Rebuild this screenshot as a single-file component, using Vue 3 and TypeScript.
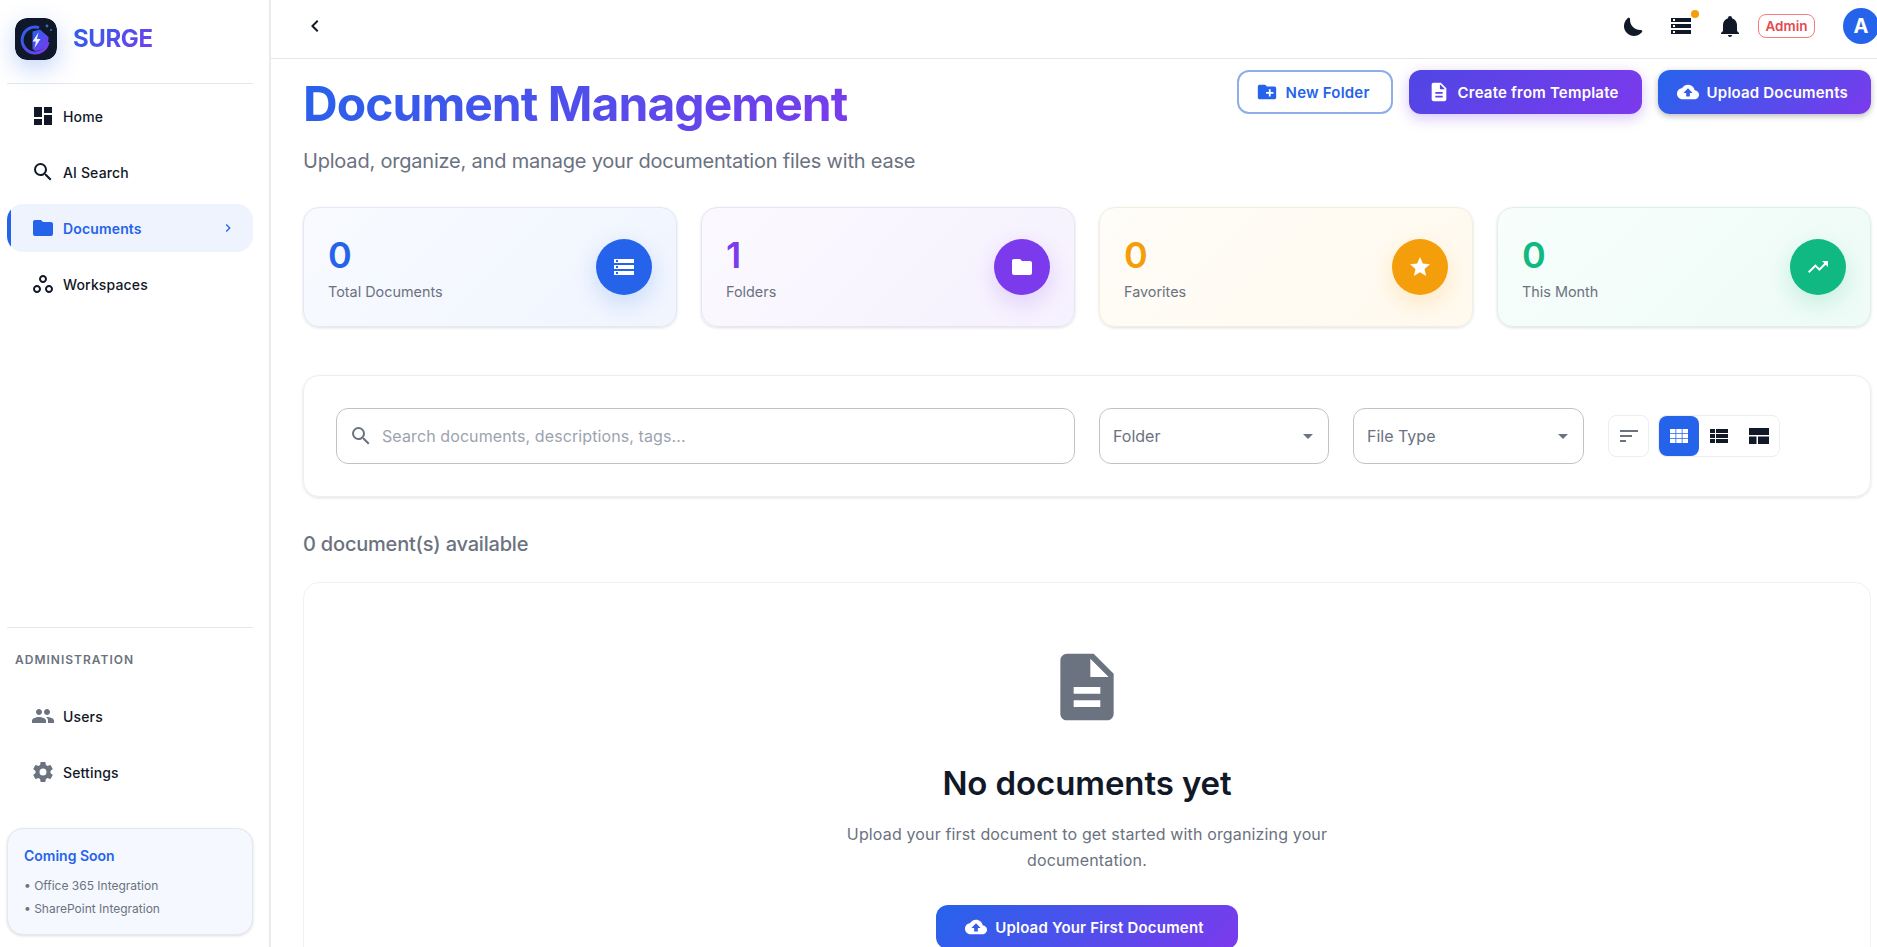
<template>
  <div class="layout">
    <aside class="sidebar">
      <div class="brand">
        <svg class="logo" viewBox="0 0 42 42">
          <defs>
            <linearGradient id="logoRing" x1="0" y1="0" x2="1" y2="1">
              <stop offset="0" stop-color="#2563eb" />
              <stop offset="1" stop-color="#7c3aed" />
            </linearGradient>
          </defs>
          <rect width="42" height="42" rx="12" fill="#0f172a" />
          <path d="M24 9.6A13 13 0 1 0 33 24" fill="none" stroke="url(#logoRing)" stroke-width="3" />
          <path d="M17.5 13.5L25 11.5L33.5 19A13 13 0 0 1 20 33L17.5 31Z" fill="url(#logoRing)" />
          <path d="M23.5 14.5L17.5 23.5h3.5l-1.5 6.5 6-9h-3.5Z" fill="#eef2ff" />
          <circle cx="32" cy="8" r="1.4" fill="#3b6ea8" />
          <circle cx="36" cy="12" r="1.1" fill="#3b6ea8" />
        </svg>
        <span class="brand-name">SURGE</span>
      </div>

      <nav class="nav">
        <a v-for="item in mainNav" :key="item.label" class="nav-item" :class="{ active: item.active }">
          <svg class="icon" viewBox="0 0 24 24"><path :d="item.icon" /></svg>
          <span>{{ item.label }}</span>
          <svg v-if="item.active" class="chev" viewBox="0 0 24 24"><path :d="icons.chevronRight" /></svg>
        </a>
      </nav>

      <div class="side-bottom">
        <div class="section-title">ADMINISTRATION</div>
        <nav class="nav">
          <a v-for="item in adminNav" :key="item.label" class="nav-item admin">
            <svg class="icon" viewBox="0 0 24 24"><path :d="item.icon" /></svg>
            <span>{{ item.label }}</span>
          </a>
        </nav>
        <div class="soon">
          <div class="soon-title">Coming Soon</div>
          <div class="soon-line">• Office 365 Integration</div>
          <div class="soon-line">• SharePoint Integration</div>
        </div>
      </div>
    </aside>

    <div class="main">
      <header class="topbar">
        <button class="back">
          <svg viewBox="0 0 24 24"><path :d="icons.chevronLeft" /></svg>
        </button>
        <div class="top-actions">
          <svg class="top-icon" viewBox="0 0 24 24"><path :d="icons.moon" /></svg>
          <span class="server">
            <svg class="top-icon" viewBox="0 0 24 24"><path :d="icons.storage" /></svg>
            <i class="dot"></i>
          </span>
          <svg class="top-icon" viewBox="0 0 24 24"><path :d="icons.bell" /></svg>
          <span class="role">Admin</span>
          <span class="avatar">A</span>
        </div>
      </header>

      <main class="page">
        <section class="page-head">
          <div>
            <h1>Document Management</h1>
            <p class="sub">Upload, organize, and manage your documentation files with ease</p>
          </div>
          <div class="head-actions">
            <button class="btn outline">
              <svg viewBox="0 0 24 24"><path :d="icons.folderPlus" /></svg>New Folder
            </button>
            <button class="btn violet">
              <svg viewBox="0 0 24 24"><path :d="icons.doc" /></svg>Create from Template
            </button>
            <button class="btn primary">
              <svg viewBox="0 0 24 24"><path :d="icons.cloud" /></svg>Upload Documents
            </button>
          </div>
        </section>

        <section class="stats">
          <div v-for="s in stats" :key="s.label" class="stat" :class="s.tone">
            <div>
              <div class="stat-num">{{ s.value }}</div>
              <div class="stat-label">{{ s.label }}</div>
            </div>
            <span class="stat-icon">
              <svg viewBox="0 0 24 24"><path :d="s.icon" /></svg>
            </span>
          </div>
        </section>

        <section class="filters">
          <label class="search">
            <svg viewBox="0 0 24 24"><path :d="icons.search" /></svg>
            <input type="text" placeholder="Search documents, descriptions, tags..." />
          </label>
          <div class="select">
            <span>Folder</span>
            <svg viewBox="0 0 24 24"><path d="M7 10l5 5 5-5z" /></svg>
          </div>
          <div class="select">
            <span>File Type</span>
            <svg viewBox="0 0 24 24"><path d="M7 10l5 5 5-5z" /></svg>
          </div>
          <button class="sort">
            <svg viewBox="0 0 24 24"><path d="M3 13H15V11H3M3 6V8H21V6M3 18H9V16H3V18Z" /></svg>
          </button>
          <div class="views">
            <button class="view on">
              <svg viewBox="0 0 24 24"><path d="M3 5h5.5v4.3H3zM9.25 5h5.5v4.3h-5.5zM15.5 5H21v4.3h-5.5zM3 10h5.5v4H3zM9.25 10h5.5v4h-5.5zM15.5 10H21v4h-5.5zM3 14.7h5.5V19H3zM9.25 14.7h5.5V19h-5.5zM15.5 14.7H21V19h-5.5z" /></svg>
            </button>
            <button class="view">
              <svg viewBox="0 0 24 24"><path d="M3 5h5v4H3zM9 5h12v4H9zM3 10h5v4H3zM9 10h12v4H9zM3 15h5v4H3zM9 15h12v4H9z" /></svg>
            </button>
            <button class="view">
              <svg viewBox="0 0 24 24"><path d="M2 4h20v7H2zM2 12.5h7.5V20H2zM11 12.5h11V20H11z" /></svg>
            </button>
          </div>
        </section>

        <div class="count">0 document(s) available</div>

        <section class="empty">
          <svg class="empty-icon" viewBox="0 0 24 24"><path :d="icons.doc" /></svg>
          <h2>No documents yet</h2>
          <p>Upload your first document to get started with organizing your documentation.</p>
          <button class="btn primary first">
            <svg viewBox="0 0 24 24"><path :d="icons.cloud" /></svg>Upload Your First Document
          </button>
        </section>
      </main>
    </div>
  </div>
</template>

<script setup lang="ts">
const icons = {
  chevronLeft: "M15.41,16.58L10.83,12L15.41,7.41L14,6L8,12L14,18L15.41,16.58Z",
  chevronRight: "M8.59,16.58L13.17,12L8.59,7.41L10,6L16,12L10,18L8.59,16.58Z",
  moon: "M18.97,15.95C19.8,15.87 20.69,17.05 20.16,17.8C19.84,18.25 19.5,18.67 19.08,19.07C15.17,23 8.84,23 4.94,19.07C1.03,15.17 1.03,8.83 4.94,4.93C5.34,4.53 5.76,4.17 6.21,3.85C6.96,3.32 8.14,4.21 8.06,5.04C7.79,7.9 8.75,10.87 10.95,13.06C13.14,15.26 16.1,16.22 18.97,15.95Z",
  storage: "M2 20h20v-4H2v4zm2-3h2v2H4v-2zM2 4v4h20V4H2zm4 3H4V5h2v2zm-4 7h20v-4H2v4zm2-3h2v2H4v-2z",
  bell: "M21,19V20H3V19L5,17V11C5,7.9 7.03,5.17 10,4.29C10,4.19 10,4.1 10,4A2,2 0 0,1 12,2A2,2 0 0,1 14,4C14,4.1 14,4.19 14,4.29C16.97,5.17 19,7.9 19,11V17L21,19M14,21A2,2 0 0,1 12,23A2,2 0 0,1 10,21",
  folder: "M10,4H4C2.89,4 2,4.89 2,6V18A2,2 0 0,0 4,20H20A2,2 0 0,0 22,18V8C22,6.89 21.1,6 20,6H12L10,4Z",
  folderPlus: "M20 6h-8l-2-2H4c-1.11 0-1.99.89-1.99 2L2 18c0 1.11.89 2 2 2h16c1.11 0 2-.89 2-2V8c0-1.11-.89-2-2-2zm-1 8h-3v3h-2v-3h-3v-2h3V9h2v3h3v2z",
  doc: "M14 2H6c-1.1 0-1.99.9-1.99 2L4 20c0 1.1.89 2 1.99 2H18c1.1 0 2-.9 2-2V8l-6-6zm2 16H8v-2h8v2zm0-4H8v-2h8v2zm-3-5V3.5L18.5 9H13z",
  cloud: "M19.35 10.04C18.67 6.59 15.64 4 12 4 9.11 4 6.6 5.64 5.35 8.04 2.34 8.36 0 10.91 0 14c0 3.31 2.69 6 6 6h13c2.76 0 5-2.24 5-5 0-2.64-2.05-4.78-4.65-4.96zM14 13v4h-4v-4H7l5-5 5 5h-3z",
  search: "M9.5,3A6.5,6.5 0 0,1 16,9.5C16,11.11 15.41,12.59 14.44,13.73L14.71,14H15.5L20.5,19L19,20.5L14,15.5V14.71L13.73,14.44C12.59,15.41 11.11,16 9.5,16A6.5,6.5 0 0,1 3,9.5A6.5,6.5 0 0,1 9.5,3M9.5,5C7,5 5,7 5,9.5C5,12 7,14 9.5,14C12,14 14,12 14,9.5C14,7 12,5 9.5,5Z",
  dashboard: "M13,3V9H21V3M13,21H21V11H13M3,21H11V15H3M3,13H11V3H3V13Z",
  workspaces: "M6 13c-2.2 0-4 1.8-4 4s1.8 4 4 4 4-1.8 4-4-1.8-4-4-4zm0 6c-1.1 0-2-.9-2-2s.9-2 2-2 2 .9 2 2-.9 2-2 2zm6-16C9.8 3 8 4.8 8 7s1.8 4 4 4 4-1.8 4-4-1.8-4-4-4zm0 6c-1.1 0-2-.9-2-2s.9-2 2-2 2 .9 2 2-.9 2-2 2zm6 4c-2.2 0-4 1.8-4 4s1.8 4 4 4 4-1.8 4-4-1.8-4-4-4zm0 6c-1.1 0-2-.9-2-2s.9-2 2-2 2 .9 2 2-.9 2-2 2z",
  people: "M16 11c1.66 0 2.99-1.34 2.99-3S17.66 5 16 5c-1.66 0-3 1.34-3 3s1.34 3 3 3zm-8 0c1.66 0 2.99-1.34 2.99-3S9.66 5 8 5C6.34 5 5 6.34 5 8s1.34 3 3 3zm0 2c-2.33 0-7 1.17-7 3.5V19h14v-2.5c0-2.33-4.67-3.5-7-3.5zm8 0c-.29 0-.62.02-.97.05 1.16.84 1.97 1.97 1.97 3.45V19h6v-2.5c0-2.33-4.67-3.5-7-3.5z",
  cog: "M12,15.5A3.5,3.5 0 0,1 8.5,12A3.5,3.5 0 0,1 12,8.5A3.5,3.5 0 0,1 15.5,12A3.5,3.5 0 0,1 12,15.5M19.43,12.97C19.47,12.65 19.5,12.33 19.5,12C19.5,11.67 19.47,11.34 19.43,11L21.54,9.37C21.73,9.22 21.78,8.95 21.66,8.73L19.66,5.27C19.54,5.05 19.27,4.96 19.05,5.05L16.56,6.05C16.04,5.66 15.5,5.32 14.87,5.07L14.5,2.42C14.46,2.18 14.25,2 14,2H10C9.75,2 9.54,2.18 9.5,2.42L9.13,5.07C8.5,5.32 7.96,5.66 7.44,6.05L4.95,5.05C4.73,4.96 4.46,5.05 4.34,5.27L2.34,8.73C2.21,8.95 2.27,9.22 2.46,9.37L4.57,11C4.53,11.34 4.5,11.67 4.5,12C4.5,12.33 4.53,12.65 4.57,12.97L2.46,14.63C2.27,14.78 2.21,15.05 2.34,15.27L4.34,18.73C4.46,18.95 4.73,19.03 4.95,18.95L7.44,17.94C7.96,18.34 8.5,18.68 9.13,18.93L9.5,21.58C9.54,21.82 9.75,22 10,22H14C14.25,22 14.46,21.82 14.5,21.58L14.87,18.93C15.5,18.67 16.04,18.34 16.56,17.94L19.05,18.95C19.27,19.03 19.54,18.95 19.66,18.73L21.66,15.27C21.78,15.05 21.73,14.78 21.54,14.63L19.43,12.97Z",
  star: "M12,17.27L18.18,21L16.54,13.97L22,9.24L14.81,8.62L12,2L9.19,8.62L2,9.24L7.45,13.97L5.82,21L12,17.27Z",
  trend: "M16 6l2.29 2.29-4.88 4.88-4-4L2 16.59 3.41 18l6-6 4 4 6.3-6.29L22 12V6z",
};

const mainNav = [
  { label: "Home", icon: icons.dashboard, active: false },
  { label: "AI Search", icon: icons.search, active: false },
  { label: "Documents", icon: icons.folder, active: true },
  { label: "Workspaces", icon: icons.workspaces, active: false },
];

const adminNav = [
  { label: "Users", icon: icons.people },
  { label: "Settings", icon: icons.cog },
];

const stats = [
  { label: "Total Documents", value: 0, tone: "blue", icon: icons.storage },
  { label: "Folders", value: 1, tone: "purple", icon: icons.folder },
  { label: "Favorites", value: 0, tone: "amber", icon: icons.star },
  { label: "This Month", value: 0, tone: "green", icon: icons.trend },
];
</script>

<style>
html,
body {
  margin: 0;
  height: 100%;
  overflow: hidden;
  background: #fff;
}
</style>

<style scoped>
.layout {
  display: flex;
  height: 947px;
  overflow: hidden;
  font-family: Inter, "Liberation Sans", sans-serif;
  color: #111827;
  background: #fff;
}

/* sidebar */
.sidebar {
  width: 271px;
  flex: none;
  box-sizing: border-box;
  height: 100%;
  padding: 0 16px 12px 7px;
  border-right: 2px solid #e9ebef;
  display: flex;
  flex-direction: column;
}
.brand {
  height: 84px;
  box-sizing: border-box;
  border-bottom: 1px solid #e5e7eb;
  padding: 18px 0 0 8px;
  display: flex;
  align-items: flex-start;
  gap: 16px;
}
.logo {
  width: 42px;
  height: 42px;
  border-radius: 12px;
  box-shadow: 0 8px 24px rgba(37, 99, 235, 0.28);
}
.brand-name {
  font-size: 24px;
  font-weight: 700;
  line-height: 42px;
  letter-spacing: -0.4px;
  background: linear-gradient(135deg, #2563eb, #7c3aed);
  -webkit-background-clip: text;
  background-clip: text;
  color: transparent;
}
.nav {
  display: flex;
  flex-direction: column;
  gap: 8px;
  padding-top: 8px;
}
.nav-item {
  position: relative;
  overflow: hidden;
  height: 48px;
  display: flex;
  align-items: center;
  gap: 8px;
  padding-left: 24px;
  border-radius: 16px;
  font-size: 14px;
  font-weight: 450;
  letter-spacing: 0.15px;
  color: #111827;
  box-sizing: border-box;
}
.nav-item .icon {
  width: 24px;
  height: 24px;
  fill: #111827;
  flex: none;
}
.nav-item.admin .icon {
  fill: #6b7280;
}
.nav-item.active {
  background: #eef3fd;
  color: #2563eb;
  font-weight: 600;
  padding-right: 17px;
}
.nav-item.active::before {
  content: "";
  position: absolute;
  left: 0;
  top: 0;
  bottom: 0;
  width: 4px;
  background: #2563eb;
}
.nav-item.active .icon {
  fill: #2563eb;
}
.chev {
  width: 16px;
  height: 16px;
  fill: #2563eb;
  margin-left: auto;
}
.side-bottom {
  margin-top: auto;
  border-top: 1px solid #e5e7eb;
}
.section-title {
  padding: 25px 0 0 8px;
  font-size: 12px;
  line-height: 14px;
  font-weight: 600;
  letter-spacing: 1px;
  color: #6b7280;
}
.side-bottom .nav {
  padding-top: 25px;
}
.soon {
  margin-top: 32px;
  height: 107px;
  box-sizing: border-box;
  padding: 17px 16px 0;
  background: #f5f8fe;
  border: 1px solid #e3e8f2;
  border-radius: 16px;
  box-shadow: 0 1px 3px rgba(0, 0, 0, 0.14);
}
.soon-title {
  font-size: 14px;
  line-height: 20px;
  font-weight: 600;
  color: #2563eb;
  margin-bottom: 8px;
}
.soon-line {
  font-size: 12px;
  line-height: 23px;
  color: #6b7280;
}

/* top bar */
.main {
  flex: 1;
  min-width: 0;
}
.topbar {
  height: 59px;
  box-sizing: border-box;
  border-bottom: 1px solid #e5e7eb;
  display: flex;
  align-items: center;
  justify-content: space-between;
  padding: 0 0 6px 32px;
  margin-right: -2px;
}
.back {
  width: 24px;
  height: 24px;
  padding: 0;
  border: 0;
  background: none;
}
.back svg {
  width: 24px;
  height: 24px;
  fill: #111827;
  display: block;
}
.top-actions {
  display: flex;
  align-items: center;
}
.top-icon {
  width: 24px;
  height: 24px;
  fill: #111827;
  display: block;
}
.server {
  position: relative;
  margin-left: 23px;
  margin-right: 25px;
}
.dot {
  position: absolute;
  top: -4px;
  right: -6px;
  width: 8px;
  height: 8px;
  border-radius: 50%;
  background: #f59e0b;
}
.role {
  margin-left: 16px;
  height: 24px;
  width: 57px;
  box-sizing: border-box;
  border: 1px solid rgba(239, 68, 68, 0.7);
  border-radius: 8px;
  color: #e5484d;
  font-size: 13.5px;
  font-weight: 600;
  display: flex;
  align-items: center;
  justify-content: center;
}
.avatar {
  margin-left: 28px;
  width: 36px;
  height: 36px;
  border-radius: 50%;
  background: #2563eb;
  color: #fff;
  font-size: 20px;
  font-weight: 700;
  display: flex;
  align-items: center;
  justify-content: center;
}

/* page */
.page {
  padding: 11px 6px 0 32px;
}
.page-head {
  display: flex;
  justify-content: space-between;
  align-items: flex-start;
  height: 137px;
}
h1 {
  margin: 5px 0 0;
  font-size: 48px;
  line-height: 58px;
  font-weight: 700;
  letter-spacing: -0.96px;
  width: fit-content;
  background: linear-gradient(135deg, #2563eb, #7c3aed);
  -webkit-background-clip: text;
  background-clip: text;
  color: transparent;
}
.sub {
  margin: 14px 0 0;
  font-size: 20px;
  line-height: 28px;
  letter-spacing: -0.2px;
  color: #6b7280;
}
.head-actions {
  display: flex;
  gap: 16px;
}
.btn {
  height: 44px;
  box-sizing: border-box;
  border: 0;
  border-radius: 12px;
  padding: 0 23px 0 19px;
  display: inline-flex;
  align-items: center;
  gap: 8px;
  font-family: inherit;
  font-size: 15px;
  font-weight: 600;
  letter-spacing: 0.2px;
  color: #fff;
}
.btn svg {
  width: 22px;
  height: 22px;
  fill: currentColor;
  flex: none;
}
.btn.outline {
  background: #fff;
  border: 2px solid #8fadea;
  color: #2563eb;
  width: 156px;
  padding: 0 17px;
}
.btn.violet {
  background: linear-gradient(135deg, #4f46e5, #7c3aed);
  box-shadow: 0 4px 14px rgba(124, 58, 237, 0.3);
}
.btn.primary {
  background: linear-gradient(135deg, #2563eb, #7c3aed);
  box-shadow: 0 2px 6px rgba(0, 0, 0, 0.28);
}

.stats {
  display: grid;
  grid-template-columns: repeat(4, 1fr);
  gap: 24px;
}
.stat {
  height: 120px;
  box-sizing: border-box;
  border: 1px solid;
  border-radius: 16px;
  padding: 0 24px;
  display: flex;
  align-items: center;
  justify-content: space-between;
  box-shadow: 0 1px 3px rgba(0, 0, 0, 0.12);
}
.stat-num {
  font-size: 36px;
  line-height: 44px;
  font-weight: 600;
  margin-top: 1px;
}
.stat-label {
  margin-top: 5px;
  font-size: 14.4px;
  line-height: 20px;
  color: #6b7280;
}
.stat-icon {
  width: 56px;
  height: 56px;
  border-radius: 50%;
  display: flex;
  align-items: center;
  justify-content: center;
}
.stat-icon svg {
  width: 24px;
  height: 24px;
  fill: #fff;
}
.stat.blue {
  background: linear-gradient(135deg, #f8faff, #f0f5fe);
  border-color: #e2e8f6;
}
.blue .stat-num {
  color: #2563eb;
}
.blue .stat-icon {
  background: #2563eb;
  box-shadow: 0 8px 24px rgba(37, 99, 235, 0.2);
}
.stat.purple {
  background: linear-gradient(135deg, #fbf9ff, #f6f1fe);
  border-color: #e8e3f5;
}
.purple .stat-num {
  color: #7c3aed;
}
.purple .stat-icon {
  background: #7c3aed;
  box-shadow: 0 8px 24px rgba(124, 58, 237, 0.2);
}
.stat.amber {
  background: linear-gradient(135deg, #fffdf8, #fff9ee);
  border-color: #f5eee0;
}
.amber .stat-num {
  color: #f59e0b;
}
.amber .stat-icon {
  background: #f59e0b;
  box-shadow: 0 8px 24px rgba(245, 158, 11, 0.2);
}
.stat.green {
  background: linear-gradient(135deg, #f7fefb, #eefbf6);
  border-color: #dff0ea;
}
.green .stat-num {
  color: #10b981;
}
.green .stat-icon {
  background: #10b981;
  box-shadow: 0 8px 24px rgba(16, 185, 129, 0.2);
}

.filters {
  margin-top: 48px;
  height: 122px;
  box-sizing: border-box;
  border: 1px solid #eceef1;
  border-radius: 16px;
  box-shadow: 0 1px 3px rgba(0, 0, 0, 0.12);
  padding: 0 32px;
  display: flex;
  align-items: center;
}
.search {
  width: 739px;
  height: 56px;
  box-sizing: border-box;
  border: 1px solid #bfc3c9;
  border-radius: 12px;
  display: flex;
  align-items: center;
  padding: 0 12px;
  gap: 7px;
}
.search svg {
  width: 24px;
  height: 24px;
  fill: #6b7280;
  flex: none;
}
.search input {
  flex: 1;
  border: 0;
  outline: 0;
  font-family: inherit;
  font-size: 16px;
  letter-spacing: 0.1px;
  color: #111827;
  background: none;
}
.search input::placeholder {
  color: #9ca3af;
  opacity: 1;
}
.select {
  margin-left: 24px;
  width: 230px;
  height: 56px;
  box-sizing: border-box;
  border: 1px solid #bfc3c9;
  border-radius: 12px;
  padding: 0 8px 0 13px;
  display: flex;
  align-items: center;
  justify-content: space-between;
  font-size: 16px;
  color: #6b7280;
}
.select + .select {
  width: 231px;
}
.select svg {
  width: 24px;
  height: 24px;
  fill: #6b7280;
}
.sort {
  margin-left: 24px;
  width: 41px;
  height: 42px;
  padding: 0;
  background: #fff;
  border: 1px solid #eceef1;
  border-radius: 8px;
  display: flex;
  align-items: center;
  justify-content: center;
}
.sort svg {
  width: 24px;
  height: 24px;
  fill: #6b7280;
}
.views {
  margin-left: 9px;
  height: 42px;
  box-sizing: border-box;
  border: 1px solid #eceef1;
  border-radius: 8px;
  display: flex;
}
.view {
  width: 40px;
  height: 40px;
  padding: 0;
  border: 0;
  background: none;
  border-radius: 8px;
  display: flex;
  align-items: center;
  justify-content: center;
}
.view svg {
  width: 24px;
  height: 24px;
  fill: #111827;
}
.view.on {
  background: #2563eb;
}
.view.on svg {
  fill: #fff;
}

.count {
  margin-top: 33px;
  font-size: 20px;
  line-height: 28px;
  letter-spacing: -0.2px;
  font-weight: 500;
  color: #6b7280;
}
.empty {
  margin-top: 24px;
  height: 500px;
  box-sizing: border-box;
  border: 1px solid #f0f1f3;
  border-radius: 16px;
  display: flex;
  flex-direction: column;
  align-items: center;
  padding-top: 64px;
}
.empty-icon {
  width: 80px;
  height: 80px;
  fill: #6b7280;
  flex: none;
}
h2 {
  margin: 34px 0 0;
  font-size: 33px;
  line-height: 44px;
  font-weight: 600;
  letter-spacing: -0.1px;
  color: #111827;
}
.empty p {
  margin: 16px 0 0;
  width: 500px;
  text-align: center;
  font-size: 16px;
  line-height: 26px;
  letter-spacing: 0.15px;
  color: #6b7280;
}
.btn.first {
  margin-top: 32px;
  padding: 0 34.5px 0 29.5px;
  flex: none;
  box-shadow: none;
}
</style>
